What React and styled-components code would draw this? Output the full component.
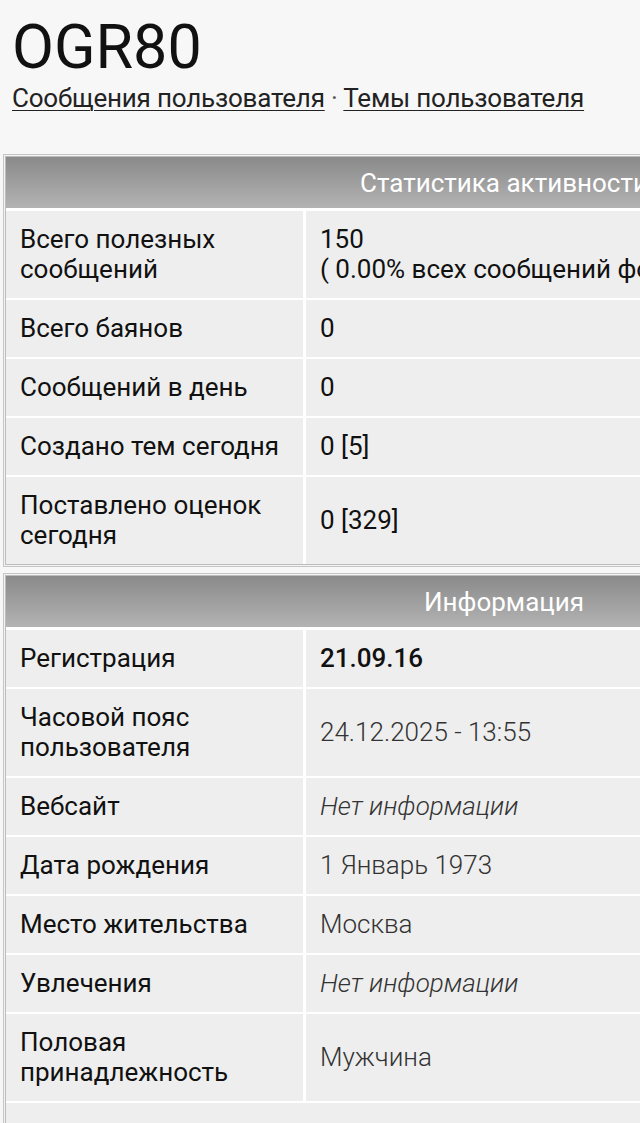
import React from "react";
import styled, { createGlobalStyle } from "styled-components";

const GlobalStyle = createGlobalStyle`
  html, body {
    margin: 0;
    padding: 0;
    background: #f7f7f7;
    font-family: Roboto, "Noto Sans", "DejaVu Sans", sans-serif;
    color: #1a1a1a;
  }
`;

const Page = styled.div`
  padding: 0 0 0 3px;
  overflow: hidden;
`;

const Head = styled.header`
  padding: 17px 0 0 9px;
  height: 154px;
  box-sizing: border-box;
`;

const Title = styled.h1`
  margin: 0;
  font-size: 61px;
  line-height: 61px;
  font-weight: 400;
  color: #111;
`;

const Links = styled.div`
  margin-top: 5px;
  font-size: 26px;
  line-height: 30px;
  letter-spacing: -0.2px;
  color: #555;
`;

const Link = styled.a`
  color: #222;
  text-decoration: underline;
  text-underline-offset: 3px;
  text-decoration-thickness: 1px;
`;

const Table = styled.section`
  width: ${(p) => p.width}px;
  border: 1px solid #c6c6c6;
  padding: 1px;
  background: #f2f2f2;
  margin-bottom: 6px;
`;

const Inner = styled.div`
  border: 1px solid #bdbdbd;
  background: #ffffff;
  display: grid;
  grid-template-columns: 297px minmax(0, 1fr);
  column-gap: 3px;
  row-gap: 2px;
`;

const HeaderCell = styled.div`
  grid-column: 1 / -1;
  height: 51px;
  margin-bottom: 1px;
  background: linear-gradient(to bottom, #8a8a8a 0%, #b3b3b3 100%);
  color: #fff;
  font-size: 26px;
  display: flex;
  align-items: center;
  justify-content: center;
`;

const Cell = styled.div`
  background: #eeeeee;
  padding: 13px 14px 14px;
  font-size: 26px;
  line-height: 30px;
  white-space: ${(p) => (p.value ? "pre" : "pre-line")};
  overflow: hidden;
  display: flex;
  flex-direction: column;
  justify-content: center;
  color: ${(p) => (p.light ? "#333" : "#111")};
  font-weight: ${(p) => (p.bold ? 500 : p.light ? 300 : 400)};
  font-style: ${(p) => (p.italic ? "italic" : "normal")};
`;

const FullCell = styled.div`
  grid-column: 1 / -1;
  background: #eeeeee;
  height: 60px;
`;

const stats = [
  { label: "Всего полезных\nсообщений", value: "150\n( 0.00% всех сообщений форума / 0.00% сообщений пользователя )" },
  { label: "Всего баянов", value: "0" },
  { label: "Сообщений в день", value: "0" },
  { label: "Создано тем сегодня", value: "0 [5]" },
  { label: "Поставлено оценок\nсегодня", value: "0 [329]" },
];

const info = [
  { label: "Регистрация", value: "21.09.16", bold: true },
  { label: "Часовой пояс\nпользователя", value: "24.12.2025 - 13:55", light: true },
  { label: "Вебсайт", value: "Нет информации", light: true, italic: true },
  { label: "Дата рождения", value: "1 Январь 1973", light: true },
  { label: "Место жительства", value: "Москва", light: true },
  { label: "Увлечения", value: "Нет информации", light: true, italic: true },
  { label: "Половая\nпринадлежность", value: "Мужчина", light: true },
];

export default function App() {
  return (
    <Page>
      <GlobalStyle />
      <Head>
        <Title>OGR80</Title>
        <Links>
          <Link href="#">Сообщения пользователя</Link> · <Link href="#">Темы пользователя</Link>
        </Links>
      </Head>

      <Table width={998}>
        <Inner>
          <HeaderCell>Статистика активности</HeaderCell>
          {stats.map((r) => (
            <React.Fragment key={r.label}>
              <Cell>{r.label}</Cell>
              <Cell value>{r.value}</Cell>
            </React.Fragment>
          ))}
        </Inner>
      </Table>

      <Table width={998}>
        <Inner>
          <HeaderCell>Информация</HeaderCell>
          {info.map((r) => (
            <React.Fragment key={r.label}>
              <Cell>{r.label}</Cell>
              <Cell value bold={r.bold} light={r.light} italic={r.italic}>
                {r.value}
              </Cell>
            </React.Fragment>
          ))}
          <FullCell />
        </Inner>
      </Table>
    </Page>
  );
}
